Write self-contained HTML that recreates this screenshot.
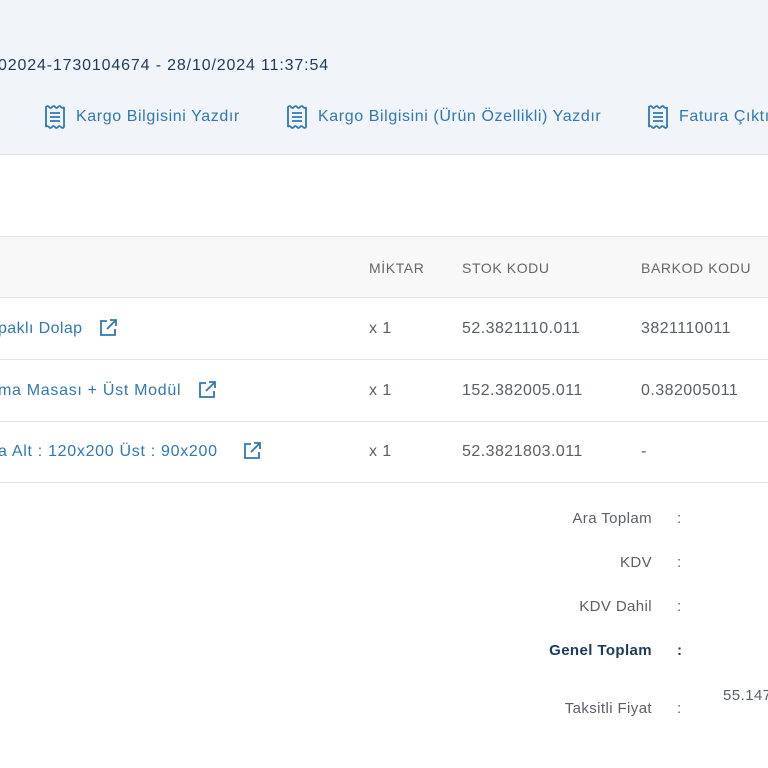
<!DOCTYPE html>
<html><head><meta charset="utf-8"><style>
*{margin:0;padding:0;box-sizing:border-box}
body{width:768px;height:768px;overflow:hidden;background:#fff;font-family:"Liberation Sans",sans-serif;position:relative}
.hdr{position:absolute;left:0;top:0;width:768px;height:155px;background:#f1f5f9;border-bottom:1px solid #dde5ee}
.t{position:absolute;white-space:nowrap}
.lnk{color:#2f78b4;font-size:16px;letter-spacing:0.6px}
.ic{position:absolute}
.th{position:absolute;left:0;top:236px;width:768px;height:62px;background:#f8f8f8;border-top:1px solid #e3e3e3;border-bottom:1px solid #e3e3e3}
.hl{position:absolute;left:0;width:768px;height:1px;background:#e3e3e3}
.g{color:#5a5f66;font-size:16px;letter-spacing:0.45px}
.h{color:#666;font-size:14px;letter-spacing:0.6px}
.r{position:absolute;text-align:right;white-space:nowrap;color:#5a5f66;font-size:15px;letter-spacing:0.4px}
</style></head><body>
<div class="hdr"></div>
<div class="t" style="left:-2px;top:57px;font-size:16px;color:#1d3a5c;letter-spacing:0.85px">02024-1730104674 - 28/10/2024 11:37:54</div>

<svg class="ic" style="left:44px;top:104px" width="22" height="26" viewBox="0 0 22 26" fill="none" stroke="#2f78b4" stroke-width="1.8"><path d="M2 3 q2 -2 3 0 q2 2 3 0 q2 -2 3 0 q2 2 3 0 q2 -2 3 0 q2 2 3 0 V23 q-1 2 -3 0 q-2 -2 -3 0 q-2 2 -3 0 q-2 -2 -3 0 q-2 2 -3 0 q-2 -2 -3 0 Z"/><path d="M6 9h10M6 13h10M6 17h10"/></svg>
<div class="t lnk" style="left:76px;top:108px">Kargo Bilgisini Yazdır</div>
<svg class="ic" style="left:286px;top:104px" width="22" height="26" viewBox="0 0 22 26" fill="none" stroke="#2f78b4" stroke-width="1.8"><path d="M2 3 q2 -2 3 0 q2 2 3 0 q2 -2 3 0 q2 2 3 0 q2 -2 3 0 q2 2 3 0 V23 q-1 2 -3 0 q-2 -2 -3 0 q-2 2 -3 0 q-2 -2 -3 0 q-2 2 -3 0 q-2 -2 -3 0 Z"/><path d="M6 9h10M6 13h10M6 17h10"/></svg>
<div class="t lnk" style="left:318px;top:108px">Kargo Bilgisini (Ürün Özellikli) Yazdır</div>
<svg class="ic" style="left:647px;top:104px" width="22" height="26" viewBox="0 0 22 26" fill="none" stroke="#2f78b4" stroke-width="1.8"><path d="M2 3 q2 -2 3 0 q2 2 3 0 q2 -2 3 0 q2 2 3 0 q2 -2 3 0 q2 2 3 0 V23 q-1 2 -3 0 q-2 -2 -3 0 q-2 2 -3 0 q-2 -2 -3 0 q-2 2 -3 0 q-2 -2 -3 0 Z"/><path d="M6 9h10M6 13h10M6 17h10"/></svg>
<div class="t lnk" style="left:679px;top:108px">Fatura Çıktısı</div>

<div class="th"></div>
<div class="t h" style="left:369px;top:260px">MİKTAR</div>
<div class="t h" style="left:462px;top:260px">STOK KODU</div>
<div class="t h" style="left:641px;top:260px">BARKOD KODU</div>

<div class="hl" style="top:359px"></div>
<div class="hl" style="top:421px"></div>
<div class="hl" style="top:482px"></div>

<div class="t lnk" style="left:-2px;top:320px;letter-spacing:0.4px">paklı Dolap</div>
<div class="t lnk" style="left:-2px;top:382px;letter-spacing:0.7px">ma Masası + Üst Modül</div>
<div class="t lnk" style="left:-2px;top:443px;letter-spacing:0.7px">a Alt : 120x200 Üst : 90x200</div>
<svg class="ic" style="left:98px;top:318px" width="20" height="20" viewBox="0 0 20 20" fill="none" stroke="#2f78b4" stroke-width="1.8"><path d="M9 3H3v14h14v-6M12 2h6v6M18 2l-9 9"/></svg>
<svg class="ic" style="left:197px;top:380px" width="20" height="20" viewBox="0 0 20 20" fill="none" stroke="#2f78b4" stroke-width="1.8"><path d="M9 3H3v14h14v-6M12 2h6v6M18 2l-9 9"/></svg>
<svg class="ic" style="left:242px;top:441px" width="20" height="20" viewBox="0 0 20 20" fill="none" stroke="#2f78b4" stroke-width="1.8"><path d="M9 3H3v14h14v-6M12 2h6v6M18 2l-9 9"/></svg>

<div class="t g" style="left:369px;top:320px">x 1</div>
<div class="t g" style="left:462px;top:320px">52.3821110.011</div>
<div class="t g" style="left:641px;top:320px">3821110011</div>
<div class="t g" style="left:369px;top:382px">x 1</div>
<div class="t g" style="left:462px;top:382px">152.382005.011</div>
<div class="t g" style="left:641px;top:382px">0.382005011</div>
<div class="t g" style="left:369px;top:443px">x 1</div>
<div class="t g" style="left:462px;top:443px">52.3821803.011</div>
<div class="t g" style="left:641px;top:443px">-</div>

<div class="r" style="right:116px;top:510px">Ara Toplam</div>
<div class="r" style="right:116px;top:554px">KDV</div>
<div class="r" style="right:116px;top:598px">KDV Dahil</div>
<div class="r" style="right:116px;top:642px;color:#1d3a5c;font-weight:bold">Genel Toplam</div>
<div class="r" style="right:116px;top:700px">Taksitli Fiyat</div>
<div class="t g" style="left:677px;top:510px;font-size:15px">:</div>
<div class="t g" style="left:677px;top:554px;font-size:15px">:</div>
<div class="t g" style="left:677px;top:598px;font-size:15px">:</div>
<div class="t" style="left:677px;top:642px;font-size:15px;color:#1d3a5c;font-weight:bold">:</div>
<div class="t g" style="left:677px;top:700px;font-size:15px">:</div>
<div class="t g" style="left:723px;top:687px;font-size:15px">55.147</div>
</body></html>
